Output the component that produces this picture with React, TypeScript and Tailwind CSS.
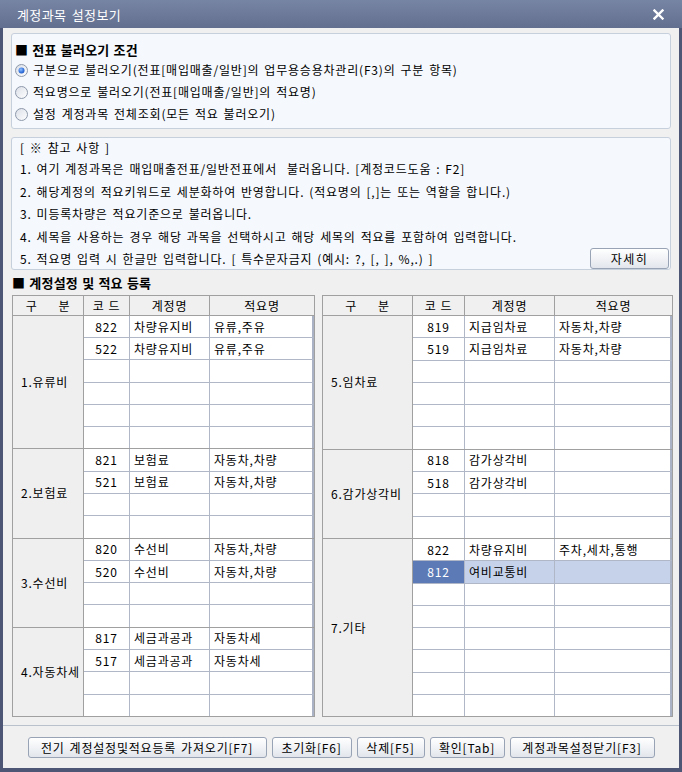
import React from "react";

type Row = { code?: string; name?: string; desc?: string; sel?: boolean };
type Group = { label: string; rows: Row[] };

const E: Row = {};
const leftGroups: Group[] = [
  {
    label: "1.유류비",
    rows: [
      { code: "822", name: "차량유지비", desc: "유류,주유" },
      { code: "522", name: "차량유지비", desc: "유류,주유" },
      E, E, E, E,
    ],
  },
  {
    label: "2.보험료",
    rows: [
      { code: "821", name: "보험료", desc: "자동차,차량" },
      { code: "521", name: "보험료", desc: "자동차,차량" },
      E, E,
    ],
  },
  {
    label: "3.수선비",
    rows: [
      { code: "820", name: "수선비", desc: "자동차,차량" },
      { code: "520", name: "수선비", desc: "자동차,차량" },
      E, E,
    ],
  },
  {
    label: "4.자동차세",
    rows: [
      { code: "817", name: "세금과공과", desc: "자동차세" },
      { code: "517", name: "세금과공과", desc: "자동차세" },
      E, E,
    ],
  },
];

const rightGroups: Group[] = [
  {
    label: "5.임차료",
    rows: [
      { code: "819", name: "지급임차료", desc: "자동차,차량" },
      { code: "519", name: "지급임차료", desc: "자동차,차량" },
      E, E, E, E,
    ],
  },
  {
    label: "6.감가상각비",
    rows: [
      { code: "818", name: "감가상각비", desc: "" },
      { code: "518", name: "감가상각비", desc: "" },
      E, E,
    ],
  },
  {
    label: "7.기타",
    rows: [
      { code: "822", name: "차량유지비", desc: "주차,세차,통행" },
      { code: "812", name: "여비교통비", desc: "", sel: true },
      E, E, E, E, E, E,
    ],
  },
];

function Radio({ checked }: { checked?: boolean }) {
  return (
    <svg width="13" height="13" viewBox="0 0 13 13" className="shrink-0">
      <defs>
        <linearGradient id={checked ? "rg1" : "rg0"} x1="0" y1="0" x2="1" y2="1">
          <stop offset="0" stopColor="#d9dee6" />
          <stop offset="1" stopColor="#ffffff" />
        </linearGradient>
        <radialGradient id="dot" cx="0.4" cy="0.35" r="0.7">
          <stop offset="0" stopColor="#8fc0ff" />
          <stop offset="0.6" stopColor="#3a78e0" />
          <stop offset="1" stopColor="#1d57c4" />
        </radialGradient>
      </defs>
      <circle cx="6.5" cy="6.5" r="6" fill={checked ? "url(#rg1)" : "url(#rg0)"} stroke="#8d98aa" strokeWidth="1" />
      {checked && <circle cx="6.5" cy="6.5" r="3" fill="url(#dot)" />}
    </svg>
  );
}

function Table({
  groups,
  widths,
  total,
}: {
  groups: Group[];
  widths: [number, number, number];
  total: string;
}) {
  const [lw, cw, nw] = widths;
  return (
    <div className={`${total} h-[422px] border border-[#a0a0a0] bg-white flex flex-col`}>
      <div className="h-[20px] flex border-b border-[#a0a0a0] bg-[#f0f0f0] shrink-0">
        <div style={{ width: lw }} className="border-r border-[#a0a0a0] flex items-center justify-center gap-[21px]">
          <span>구</span>
          <span>분</span>
        </div>
        <div style={{ width: cw }} className="border-r border-[#a0a0a0] flex items-center justify-center gap-[4px]">
          <span>코</span>
          <span>드</span>
        </div>
        <div style={{ width: nw }} className="border-r border-[#a0a0a0] flex items-center justify-center">
          계정명
        </div>
        <div className="flex-1 flex items-center justify-center">적요명</div>
      </div>
      <div className="flex-1 flex flex-col min-h-0">
        {groups.map((g, gi) => (
          <div
            key={gi}
            style={{ flexGrow: g.rows.length, flexBasis: 0 }}
            className={`flex min-h-0 ${gi < groups.length - 1 ? "border-b border-[#a0a0a0]" : ""}`}
          >
            <div
              style={{ width: lw }}
              className="shrink-0 bg-[#efefef] border-r border-[#a0a0a0] flex items-center pl-[8px]"
            >
              {g.label}
            </div>
            <div className="flex-1 flex flex-col min-h-0">
              {g.rows.map((r, ri) => (
                <div
                  key={ri}
                  className={`flex-1 basis-0 flex min-h-0 ${ri < g.rows.length - 1 ? "border-b border-[#b0b8c8]" : ""}`}
                >
                  <div
                    style={{ width: cw }}
                    className={`border-r border-[#b0b8c8] flex items-center justify-center ${
                      r.sel ? "bg-[#5b7ab6] text-white" : ""
                    }`}
                  >
                    {r.code}
                  </div>
                  <div
                    style={{ width: nw }}
                    className={`border-r border-[#b0b8c8] flex items-center pl-[4px] ${r.sel ? "bg-[#c6d2ea]" : ""}`}
                  >
                    {r.name}
                  </div>
                  <div
                    className={`flex-1 border-r-2 border-[#aab3c6] flex items-center pl-[4px] ${
                      r.sel ? "bg-[#c6d2ea]" : ""
                    }`}
                  >
                    {r.desc}
                  </div>
                </div>
              ))}
            </div>
          </div>
        ))}
      </div>
    </div>
  );
}

function Btn({ w, children }: { w: string; children: React.ReactNode }) {
  return (
    <div
      className={`${w} h-[21px] rounded-[3px] border border-[#98a3b5] bg-gradient-to-b from-[#ffffff] to-[#e2e6ec] flex items-center justify-center text-[12px] text-black whitespace-nowrap`}
    >
      {children}
    </div>
  );
}

export default function App() {
  return (
    <div className="w-[682px] h-[772px] bg-[#4d5775] flex flex-col font-['Noto_Sans_CJK_KR','Noto_Sans',sans-serif] text-[12px] text-black leading-none tracking-[0.8px] [word-spacing:1.5px]">
      {/* Title bar */}
      <div className="h-[28px] shrink-0 bg-gradient-to-b from-[#7785a4] to-[#636f8f] flex items-center justify-between pl-[17px] pr-[18px]">
        <span className="text-white text-[13px] tracking-[0.4px] [word-spacing:2px]">계정과목 설정보기</span>
        <svg width="11" height="11" viewBox="0 0 11 11">
          <path d="M1.5 1.5 L9.5 9.5 M9.5 1.5 L1.5 9.5" stroke="#ffffff" strokeWidth="2.4" strokeLinecap="square" />
        </svg>
      </div>

      {/* Body */}
      <div className="flex-1 mx-[3px] mb-[4px] bg-[#f0f0f0] flex flex-col">
        {/* Box 1 */}
        <div className="mt-[5px] ml-[8px] w-[660px] h-[96px] border border-[#c6d0dc] rounded-[3px] bg-[#f5f8fc] pl-[3px] pt-[5px] flex flex-col">
          <div className="h-[20px] flex items-center font-bold text-[13px] tracking-[0.2px] [word-spacing:1px]">■ 전표 불러오기 조건</div>
          <div className="h-[22px] flex items-center gap-[5px]">
            <Radio checked />
            <span>구분으로 불러오기(전표[매입매출/일반]의 업무용승용차관리(F3)의 구분 항목)</span>
          </div>
          <div className="h-[22px] flex items-center gap-[5px]">
            <Radio />
            <span>적요명으로 불러오기(전표[매입매출/일반]의 적요명)</span>
          </div>
          <div className="h-[22px] flex items-center gap-[5px]">
            <Radio />
            <span>설정 계정과목 전체조회(모든 적요 불러오기)</span>
          </div>
        </div>

        {/* Box 2 */}
        <div className="mt-[8px] ml-[8px] w-[660px] h-[133px] border border-[#c6d0dc] rounded-[3px] bg-[#f5f8fc] pl-[8px] flex flex-col">
          <div className="h-[20px] flex items-center">[ ※ 참고 사항 ]</div>
          <div className="h-[22.5px] flex items-center whitespace-pre">1. 여기 계정과목은 매입매출전표/일반전표에서  불러옵니다. [계정코드도움 : F2]</div>
          <div className="h-[22.5px] flex items-center">2. 해당계정의 적요키워드로 세분화하여 반영합니다. (적요명의 [,]는 또는 역할을 합니다.)</div>
          <div className="h-[22.5px] flex items-center">3. 미등록차량은 적요기준으로 불러옵니다.</div>
          <div className="h-[22.5px] flex items-center">4. 세목을 사용하는 경우 해당 과목을 선택하시고 해당 세목의 적요를 포함하여 입력합니다.</div>
          <div className="h-[21px] flex items-center justify-between pr-[1px]">
            <span>5. 적요명 입력 시 한글만 입력합니다. [ 특수문자금지 (예시: ?, [, ], %,.) ]</span>
            <Btn w="w-[79px]">
              <span className="tracking-[1.5px]">자세히</span>
            </Btn>
          </div>
        </div>

        {/* Heading */}
        <div className="h-[24px] ml-[9px] flex items-center font-bold text-[13px] tracking-[0.2px] [word-spacing:1px]">■ 계정설정 및 적요 등록</div>

        {/* Tables */}
        <div className="mt-[1px] ml-[9px] flex gap-[7px]">
          <Table groups={leftGroups} widths={[71, 46, 80]} total="w-[303px]" />
          <Table groups={rightGroups} widths={[90, 52, 90]} total="w-[351px]" />
        </div>

        {/* Separator */}
        <div className="mt-[8px] border-t border-[#b9c1cd]" />

        {/* Buttons */}
        <div className="mt-[11px] flex justify-center gap-[5px]">
          <Btn w="w-[239px]">전기 계정설정및적요등록 가져오기[F7]</Btn>
          <Btn w="w-[80px]">초기화[F6]</Btn>
          <Btn w="w-[68px]">삭제[F5]</Btn>
          <Btn w="w-[75px]">확인[Tab]</Btn>
          <Btn w="w-[145px]">계정과목설정닫기[F3]</Btn>
        </div>
      </div>
    </div>
  );
}
